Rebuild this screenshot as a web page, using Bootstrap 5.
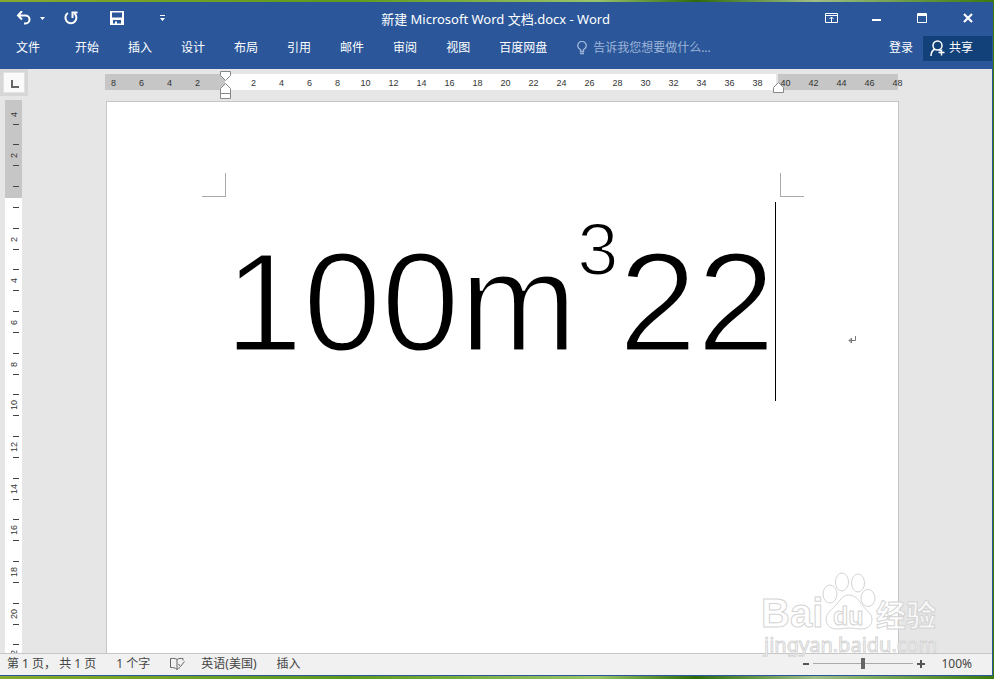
<!DOCTYPE html>
<html lang="zh-CN">
<head>
<meta charset="utf-8">
<meta name="viewport" content="width=device-width, initial-scale=1">
<title>新建 Microsoft Word 文档.docx - Word</title>
<link href="https://cdn.jsdelivr.net/npm/bootstrap@5.3.0/dist/css/bootstrap.min.css" rel="stylesheet">
<style>
  body { font-family: "Noto Sans", "Noto Sans CJK SC", sans-serif; font-size: 12px; line-height: 20px; background: linear-gradient(90deg, #86a92d, #5e9a1c 35%, #9bc46a 60%, #2f6b0c 70%, #9fbf86 82%, #3c7a0a); }
  button, input { font-family: inherit; font-size: 12px; line-height: 20px; }
  svg { display: block; }
  .desk { padding: 2px 1px 3px 0; }
  .app { background: #e6e6e6; border: solid #2b579a; border-width: 0 1px 1px 0; }
  .top { background: #2b579a; color: #fff; height: 67px; }
  .top button, .top input { background: transparent; border: 0; padding: 0; color: inherit; }
  .titlebar { height: 32px; }
  .title-text { font-size: 13px; line-height: 20px; padding-top: 2px; }
  .side { flex: 1 1 0; }
  .quick { padding-left: 16px; }
  .winbtns { gap: 32px; padding-right: 17px; }
  .menu { height: 28px; padding-left: 16px; }
  .tabs { gap: 29px; }
  .tabs li:first-child { margin-right: 6px; }
  .tell { color: #9db4d8; margin-left: 30px; gap: 6px; }
  .top .tell input { width: 150px; }
  .tell input::placeholder { color: #9db4d8; opacity: 1; }
  .top .share { background: #124078; height: 25px; width: 69px; margin-left: 10px; padding-left: 7px; gap: 3px; }
  .work { min-height: 0; }
  .left { width: 28px; }
  .corner { width: 28px; height: 27px; background: #d6d6d6; padding: 3px; }
  .corner button { width: 22px; height: 21px; background: #fafafa; border: 1px solid #e3e3e3; padding: 3px 0 0 7px; }
  .vrule { margin: 4px 6px 0 5px; background: linear-gradient(#c6c6c6 98px, #fff 98px); font: 9px/10px "Liberation Sans", sans-serif; color: #333; min-height: 0; }
  .vcells { height: 583px; margin-top: -7px; }
  .vcell { flex: 1 1 0; padding-left: 4px; }
  .vcell span { position: relative; height: 22px; width: 10px; writing-mode: vertical-rl; transform: rotate(180deg); text-align: center; }
  .vcell span::before, .vcell span::after { content: ""; position: absolute; left: 0; width: 6px; height: 1px; background: #444; }
  .vcell span::before { top: 0; }
  .vcell span::after { bottom: 0; }
  .vcell:first-child span::after { display: none; }
  .canvas { padding: 5px 16px 0 0; min-height: 0; }
  .hrule { width: 793px; height: 16px; font: 9px/18px "Liberation Sans", sans-serif; color: #333; position: relative; margin-left: -2px; }
  .hrule span { width: 28px; flex: none; text-align: center; }
  .r-left { width: 120px; background: #c6c6c6; padding-right: 13px; overflow: hidden; }
  .r-mid { background: #fff; padding-left: 15px; }
  .r-right { width: 120px; background: #c6c6c6; margin-left: 2px; }
  .r-right span:first-child { margin-left: -6px; }
  .handle { position: absolute; }
  .h-in { left: 115px; top: -3px; }
  .h-out { left: 668px; top: 8px; }
  .sheet { width: 793px; margin-top: 11px; background: #fff; border: solid #c6c6c6; border-width: 1px 1px 0 1px; padding: 71px 94px 0 95px; min-height: 0; }
  .crop { width: 24px; height: 24px; border: solid #aaa; }
  .crop-l { border-width: 0 1px 1px 0; }
  .crop-r { border-width: 0 0 1px 1px; }
  .para { margin: 5px 0 0 23px; color: #000; font: 141px/200px "Liberation Sans", sans-serif; height: 199px; white-space: nowrap; -webkit-text-stroke: 3px #fff; }
  .para sup { font-size: 74px; line-height: 0; top: 0; vertical-align: 76px; -webkit-text-stroke: 2px #fff; }
  .caret { width: 1px; background: #000; height: 199px; }
  .pilcrow { margin: 134px 0 0 72px; }
  .status { height: 22px; background: #f1f1f1; border-top: 1px solid #c6c6c6; color: #444; padding: 0 20px 2px 7px; line-height: 18px; }
  .status button { border: 0; background: transparent; padding: 0; color: inherit; line-height: 18px; }
  .zoom { -webkit-appearance: none; appearance: none; width: 100px; height: 12px; background: linear-gradient(#aaa, #aaa) center / 100% 1px no-repeat; }
  .zoom::-webkit-slider-thumb { -webkit-appearance: none; width: 4px; height: 11px; background: #666; }
  .brand { position: absolute; right: 50px; bottom: 18px; pointer-events: none; }
</style>
</head>
<body class="vh-100 overflow-hidden">
<div class="desk h-100">
<div class="app h-100 d-flex flex-column position-relative">
  <header class="top flex-shrink-0">
    <div class="titlebar d-flex align-items-center">
      <div class="side quick d-flex align-items-center">
        <button aria-label="撤消"><svg width="16" height="14" viewBox="0 0 16 14" fill="none" stroke="#fff" stroke-width="2"><path d="M6 0 2 4.500l4 4M2 4.500h7.500a4 4 0 0 1 0 8H8"/></svg></button>
        <button class="ms-2" aria-label="撤消选项"><svg width="5" height="3" fill="#fff"><path d="M0 0h5L2.500 3z"/></svg></button>
        <button class="ms-3" aria-label="重复"><svg width="20" height="14" viewBox="-3 0 20 14" fill="none" stroke="#fff" stroke-width="2"><path d="M4 2A5.500 5.500 0 1 0 10.500 2.500M8.500 7V1.500h5"/></svg></button>
        <button class="ms-4" aria-label="保存"><svg width="28" height="14" viewBox="-5 0 28 14"><path fill="#fff" fill-rule="evenodd" d="M0 0h14v14H0zM2 1.500v5h10v-5zM3 9v3.500h2V10.500h2v2h4V9z"/></svg></button>
        <button class="ms-4" aria-label="自定义快速访问工具栏"><svg width="15" height="6" viewBox="-3 0 15 6" fill="#fff"><path d="M0 0h5v1H0zM0 3h5L2.500 6z"/></svg></button>
      </div>
      <h1 class="m-0 fw-normal title-text">新建 Microsoft Word 文档.docx - Word</h1>
      <div class="side winbtns d-flex align-items-center justify-content-end">
        <button aria-label="功能区显示选项"><svg width="13" height="10" viewBox="0 0 13 10" fill="none" stroke="#fff"><path d="M.5.5h12v9H.5zM.5 2.500h12M6.500 9V4M4.500 6l2-2 2 2"/></svg></button>
        <button aria-label="最小化"><svg width="13" height="12" fill="#fff"><path d="M2 7h9v2H2z"/></svg></button>
        <button aria-label="最大化"><svg width="14" height="10" viewBox="-2 0 14 10" fill="none" stroke="#fff"><path d="M.5.5h9v9H.5zM0 1.500h10M0 2.500h10"/></svg></button>
        <button aria-label="关闭"><svg width="14" height="10" viewBox="-2 0 14 10" stroke="#fff" stroke-width="2.200"><path d="M1 1l8 8M9 1 1 9"/></svg></button>
      </div>
    </div>
    <nav class="menu d-flex align-items-center">
      <ul class="tabs list-unstyled d-flex m-0">
        <li><button>文件</button></li><li><button>开始</button></li><li><button>插入</button></li><li><button>设计</button></li><li><button>布局</button></li><li><button>引用</button></li><li><button>邮件</button></li><li><button>审阅</button></li><li><button>视图</button></li><li><button>百度网盘</button></li>
      </ul>
      <label class="tell d-flex align-items-center"><svg width="10" height="14" viewBox="0 0 10 14" fill="none" stroke="#9db4d8" stroke-width="1.300"><path d="M3.500 10.500v-2A4.200 4.200 0 1 1 6.500 8.500v2zM3 12.500h4"/></svg><input type="text" placeholder="告诉我您想要做什么..." aria-label="告诉我您想要做什么"></label>
      <button class="ms-auto">登录</button>
      <button class="share d-flex align-items-center"><svg width="16" height="17" viewBox="0 0 16 17" fill="none" stroke="#fff" stroke-width="1.500"><circle cx="7.500" cy="5.500" r="4.500"/><path d="M1 16c0-4 2-6 4-7M9 9.500l1.500 1.500M11.500 9.500v6M8.500 12.500h6"/></svg>共享</button>
    </nav>
  </header>

  <main class="work flex-grow-1 d-flex">
    <aside class="left d-flex flex-column flex-shrink-0">
      <div class="corner flex-shrink-0"><button aria-label="制表符"><svg width="8" height="8" fill="none" stroke="#666" stroke-width="2"><path d="M1 0v7h7"/></svg></button></div>
      <div class="vrule flex-grow-1 overflow-hidden">
        <div class="vcells d-flex flex-column">
          <div class="vcell d-flex align-items-center"><span>4</span></div><div class="vcell d-flex align-items-center"><span>2</span></div><div class="vcell d-flex align-items-center"><span></span></div><div class="vcell d-flex align-items-center"><span>2</span></div><div class="vcell d-flex align-items-center"><span>4</span></div><div class="vcell d-flex align-items-center"><span>6</span></div><div class="vcell d-flex align-items-center"><span>8</span></div><div class="vcell d-flex align-items-center"><span>10</span></div><div class="vcell d-flex align-items-center"><span>12</span></div><div class="vcell d-flex align-items-center"><span>14</span></div><div class="vcell d-flex align-items-center"><span>16</span></div><div class="vcell d-flex align-items-center"><span>18</span></div><div class="vcell d-flex align-items-center"><span>20</span></div><div class="vcell d-flex align-items-center"><span>22</span></div>
        </div>
      </div>
    </aside>
    <section class="canvas flex-grow-1 d-flex flex-column align-items-center">
      <div class="hrule d-flex flex-shrink-0">
        <div class="r-left d-flex justify-content-end"><span>8</span><span>6</span><span>4</span><span>2</span></div>
        <div class="r-mid d-flex flex-grow-1"><span>2</span><span>4</span><span>6</span><span>8</span><span>10</span><span>12</span><span>14</span><span>16</span><span>18</span><span>20</span><span>22</span><span>24</span><span>26</span><span>28</span><span>30</span><span>32</span><span>34</span><span>36</span><span>38</span></div>
        <div class="r-right d-flex"><span>40</span><span>42</span><span>44</span><span>46</span><span>48</span></div>
        <svg class="handle h-in" width="11" height="28" fill="#fff" stroke="#888"><path d="M.5.5h10v4l-5 5-5-5zM.5 22.500v-5l5-5 5 5v5zM.5 22.500h10v5H.5z"/></svg>
        <svg class="handle h-out" width="11" height="11" fill="#fff" stroke="#888"><path d="M.5 10.500v-5l5-5 5 5v5z"/></svg>
      </div>
      <article class="sheet flex-grow-1 overflow-hidden">
        <div class="d-flex justify-content-between"><div class="crop crop-l"></div><div class="crop crop-r"></div></div>
        <div class="para d-flex"><div class="flex-shrink-0">100m<sup>3</sup>22</div><div class="caret flex-shrink-0"></div><svg class="pilcrow flex-shrink-0" width="8" height="8" viewBox="0 0 8 8" fill="none" stroke="#777"><path d="M7.500 0v4.500H1M3.500 2v5L1 4.500z"/></svg></div>
      </article>
    </section>
  </main>

  <footer class="status d-flex align-items-center flex-shrink-0">
    <span>第 1 页， 共 1 页</span>
    <span class="ms-3 ps-1">1 个字</span>
    <button class="ms-3 ps-1" aria-label="校对"><svg width="15" height="14" viewBox="0 0 15 14" fill="none" stroke="#666"><path d="M7 2.500C5 1 3 1.500.5 1.500v9c2.500 0 4.500 0 6.500 2 1-1 2-1.500 3-2M7 2.500v10M7 2.500c2-1.500 4-1 6-1v2M8.500 7l2 2.500 4-5"/></svg></button>
    <button class="ms-3">英语(美国)</button>
    <button class="ms-3 ps-1">插入</button>
    <div class="ms-auto d-flex align-items-center">
      <button aria-label="缩小"><svg width="6" height="6"><path d="M0 2h6v2H0z" fill="#555"/></svg></button>
      <input class="zoom mx-1" type="range" aria-label="缩放" min="0" max="100" value="50">
      <button aria-label="放大"><svg width="8" height="8"><path d="M0 3h3V0h2v3h3v2H5v3H3V5H0z" fill="#555"/></svg></button>
      <span class="ms-3">100%</span>
    </div>
  </footer>

  <svg class="brand" width="184" height="86" viewBox="0 0 184 86" fill="#fff" fill-opacity=".8" stroke="#d4d4d4" stroke-width="1" font-family="Liberation Sans, Noto Sans CJK SC, sans-serif">
    <ellipse cx="72" cy="23" rx="7" ry="9"/><ellipse cx="84" cy="11" rx="6.500" ry="9"/><ellipse cx="100" cy="12" rx="6.500" ry="9"/><ellipse cx="110" cy="27" rx="7" ry="8.500"/>
    <path d="M91 24c7 0 10 6 14 11s9 8 9 13c0 7-5 10-11 10-4 0-7-1-12-1s-8 1-12 1c-6 0-11-3-11-10 0-5 5-9 9-13 5-5 7-11 14-11z"/>
    <text x="3" y="56" font-size="40" font-weight="700">Bai</text>
    <text x="75" y="54" font-size="25" font-weight="700">du</text>
    <text x="118" y="55" font-size="30" font-weight="700">经验</text>
    <text x="6" y="81" font-size="20" font-family="Noto Sans, sans-serif">jingyan.baidu.com</text>
  </svg>
</div>
</div>
<script src="https://cdn.jsdelivr.net/npm/bootstrap@5.3.0/dist/js/bootstrap.bundle.min.js"></script>
</body>
</html>
